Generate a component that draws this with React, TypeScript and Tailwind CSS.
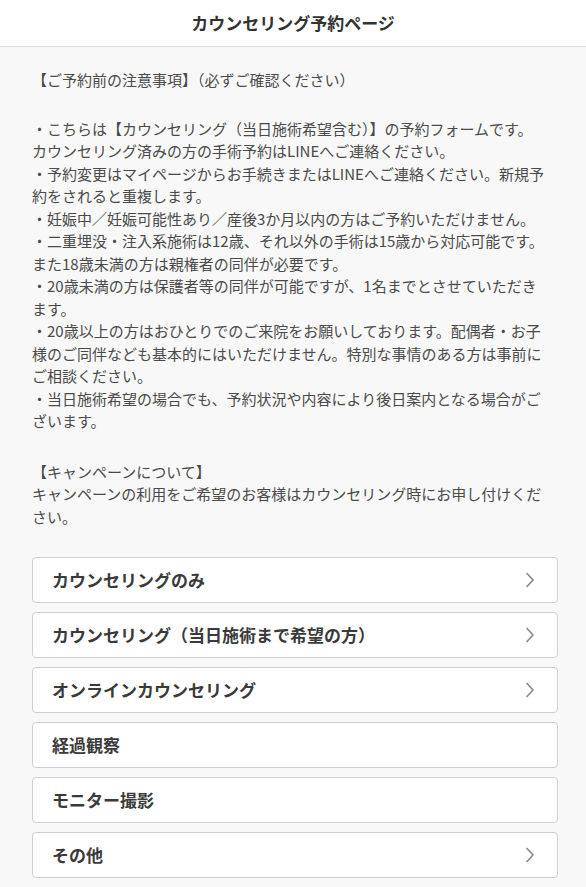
// 改行位置は参照画像どおりに固定
const notes = [
  '・こちらは【カウンセリング（当日施術希望含む）】の予約フォームです。',
  'カウンセリング済みの方の手術予約はLINEへご連絡ください。',
  '・予約変更はマイページからお手続きまたはLINEへご連絡ください。新規予',
  '約をされると重複します。',
  '・妊娠中／妊娠可能性あり／産後3か月以内の方はご予約いただけません。',
  '・二重埋没・注入系施術は12歳、それ以外の手術は15歳から対応可能です。',
  'また18歳未満の方は親権者の同伴が必要です。',
  '・20歳未満の方は保護者等の同伴が可能ですが、1名までとさせていただき',
  'ます。',
  '・20歳以上の方はおひとりでのご来院をお願いしております。配偶者・お子',
  '様のご同伴なども基本的にはいただけません。特別な事情のある方は事前に',
  'ご相談ください。',
  '・当日施術希望の場合でも、予約状況や内容により後日案内となる場合がご',
  'ざいます。',
];

const campaign = [
  '【キャンペーンについて】',
  'キャンペーンの利用をご希望のお客様はカウンセリング時にお申し付けくだ',
  'さい。',
];

const menus = [
  { label: 'カウンセリングのみ', arrow: true },
  { label: 'カウンセリング（当日施術まで希望の方）', arrow: true },
  { label: 'オンラインカウンセリング', arrow: true },
  { label: '経過観察', arrow: false },
  { label: 'モニター撮影', arrow: false },
  { label: 'その他', arrow: true },
];

export default function App() {
  return (
    <div
      className="min-h-screen w-full bg-[#f8f8f8] text-[#4a4a4a]"
      style={{ fontFamily: '"Noto Sans CJK JP", "Noto Sans", sans-serif' }}
    >
      {/* header */}
      <header className="h-[47px] bg-white border-b border-[#e0e0e0] flex items-center justify-center">
        <h1 className="text-[17px] font-bold text-[#333]">カウンセリング予約ページ</h1>
      </header>

      <main className="pl-8 pr-7 pt-[22px] pb-4">
        <div className="text-[15px] leading-[22.5px]">
          <p>【ご予約前の注意事項】（必ずご確認ください）</p>
          <div className="mt-[26px]">
            {notes.map((n) => (
              <p key={n} className="whitespace-nowrap">{n}</p>
            ))}
          </div>
          <div className="mt-[28px]">
            {campaign.map((n) => (
              <p key={n} className="whitespace-nowrap">{n}</p>
            ))}
          </div>
        </div>

        <div className="mt-[29px] flex flex-col gap-[9px]">
          {menus.map((m) => (
            <button
              key={m.label}
              className="h-[46px] w-full bg-white border border-[#cfcfcf] rounded-[4px] pl-[19px] pr-[22px] flex items-center justify-between text-left"
            >
              <span className="text-[17px] font-bold text-[#3a3a3a]">{m.label}</span>
              {m.arrow && (
                <svg width="10" height="16" viewBox="0 0 10 16" fill="none">
                  <path d="M2 1.5 L8 8 L2 14.5" stroke="#8a8a8a" strokeWidth="1.7" strokeLinecap="round" strokeLinejoin="round" />
                </svg>
              )}
            </button>
          ))}
        </div>
      </main>
    </div>
  );
}
